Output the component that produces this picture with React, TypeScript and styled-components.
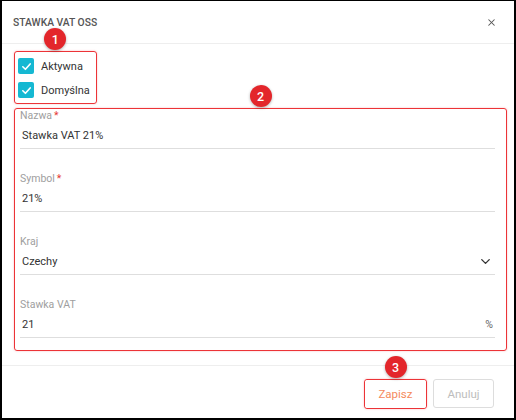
import styled, { createGlobalStyle } from 'styled-components';
import { ChevronDown, X } from 'lucide-react';

const GlobalStyle = createGlobalStyle`
  body {
    margin: 0;
    background: #fff;
    font-family: Roboto, 'Liberation Sans', Arial, sans-serif;
  }
  * {
    box-sizing: border-box;
  }
`;

const Frame = styled.div`
  width: 516px;
  height: 420px;
  display: flex;
  flex-direction: column;
  background: #fff;
  border-style: solid;
  border-color: #000;
  border-width: 1px 2px 2px 2px;
`;

const Header = styled.header`
  height: 43px;
  flex-shrink: 0;
  display: flex;
  align-items: center;
  justify-content: space-between;
  padding: 0 17px 0 11px;
  border-bottom: 1px solid #eeeeee;
`;

const Title = styled.h1`
  margin: 0;
  font-size: 10.3px;
  font-weight: 500;
  text-transform: uppercase;
  color: #555;
`;

const CloseButton = styled.button`
  border: 0;
  background: none;
  padding: 0;
  display: flex;
  color: #555;
  cursor: pointer;
`;

const Body = styled.div`
  flex: 1;
  display: flex;
  flex-direction: column;
  align-items: flex-start;
  padding: 7px 7px 14px 12px;
`;

const Annotated = styled.div<{ $pad?: string; $full?: boolean; $mt?: number }>`
  position: relative;
  border: 1px solid #ec3337;
  border-radius: 3px;
  box-shadow: 0 0 2px rgba(236, 51, 55, 0.35);
  padding: ${(p) => p.$pad || '0'};
  margin-top: ${(p) => p.$mt || 0}px;
  align-self: ${(p) => (p.$full ? 'stretch' : 'auto')};
`;

const Badge = styled.span`
  position: absolute;
  top: -24px;
  left: 50%;
  transform: translateX(-50%);
  width: 22px;
  height: 22px;
  border-radius: 50%;
  background: #e3262b;
  color: #fff;
  font-size: 12.5px;
  font-weight: 500;
  display: flex;
  align-items: center;
  justify-content: center;
  box-shadow: 0 1px 3px rgba(0, 0, 0, 0.3);
`;

const CheckList = styled.div`
  display: flex;
  flex-direction: column;
  gap: 8px;
`;

const CheckRow = styled.label`
  display: flex;
  align-items: center;
  gap: 7px;
  height: 16px;
  font-size: 11px;
  color: #333;
`;

const CheckBox = styled.span`
  width: 16px;
  height: 16px;
  border-radius: 2px;
  background: #15b8d2;
  display: flex;
  align-items: center;
  justify-content: center;
`;

const Field = styled.div`
  display: flex;
  flex-direction: column;
  border-bottom: 1px solid #dedede;
  & + & {
    margin-top: 23px;
  }
`;

const FieldLabel = styled.div`
  height: 14px;
  line-height: 14px;
  font-size: 10.5px;
  color: #9e9e9e;
`;

const Required = styled.span`
  color: #e53935;
  margin-left: 2px;
`;

const FieldInput = styled.div`
  height: 25px;
  display: flex;
  align-items: center;
  justify-content: space-between;
  padding: 0 2px 0 2px;
  font-size: 11px;
  color: #333;
`;

const Suffix = styled.span`
  font-size: 10.5px;
  color: #666;
`;

const Form = styled.div`
  display: flex;
  flex-direction: column;
  padding: 0 11px 12px 5px;
`;

const Footer = styled.footer`
  flex-shrink: 0;
  height: 53px;
  display: flex;
  justify-content: flex-end;
  align-items: flex-start;
  gap: 6px;
  padding: 13px 20px 0 0;
  border-top: 1px solid #eeeeee;
`;

const Button = styled.button<{ $primary?: boolean }>`
  width: 61px;
  height: ${(p) => (p.$primary ? 28 : 29)}px;
  border-radius: 3px;
  border: ${(p) => (p.$primary ? '0' : '1px solid #dddddd')};
  background: #fff;
  font-family: inherit;
  font-size: 11.5px;
  color: ${(p) => (p.$primary ? '#f58a5c' : '#bdbdbd')};
  cursor: pointer;
`;

const Check = () => (
  <svg width="11" height="11" viewBox="0 0 12 12">
    <path d="M2 6.3 L4.8 9 L10 3.2" fill="none" stroke="#fff" strokeWidth="1.8" strokeLinecap="round" strokeLinejoin="round" />
  </svg>
);

const fields = [
  { label: 'Nazwa', required: true, value: 'Stawka VAT 21%' },
  { label: 'Symbol', required: true, value: '21%' },
  { label: 'Kraj', select: true, value: 'Czechy' },
  { label: 'Stawka VAT', value: '21', suffix: '%' },
];

const App = () => {
  return (
    <>
      <GlobalStyle />
      <Frame>
        <Header>
          <Title>Stawka VAT OSS</Title>
          <CloseButton>
            <X size={11} strokeWidth={2.2} />
          </CloseButton>
        </Header>
        <Body>
          <Annotated $pad="6px 6px 5px 3px">
            <Badge>1</Badge>
            <CheckList>
              <CheckRow>
                <CheckBox>
                  <Check />
                </CheckBox>
                Aktywna
              </CheckRow>
              <CheckRow>
                <CheckBox>
                  <Check />
                </CheckBox>
                Domyślna
              </CheckRow>
            </CheckList>
          </Annotated>
          <Annotated $full $mt={4}>
            <Badge>2</Badge>
            <Form>
              {fields.map((f) => (
                <Field key={f.label}>
                  <FieldLabel>
                    {f.label}
                    {f.required && <Required>*</Required>}
                  </FieldLabel>
                  <FieldInput>
                    <span>{f.value}</span>
                    {f.select && <ChevronDown size={15} strokeWidth={2.2} color="#333" />}
                    {f.suffix && <Suffix>{f.suffix}</Suffix>}
                  </FieldInput>
                </Field>
              ))}
            </Form>
          </Annotated>
        </Body>
        <Footer>
          <Annotated>
            <Badge>3</Badge>
            <Button $primary>Zapisz</Button>
          </Annotated>
          <Button>Anuluj</Button>
        </Footer>
      </Frame>
    </>
  );
};

export default App;
